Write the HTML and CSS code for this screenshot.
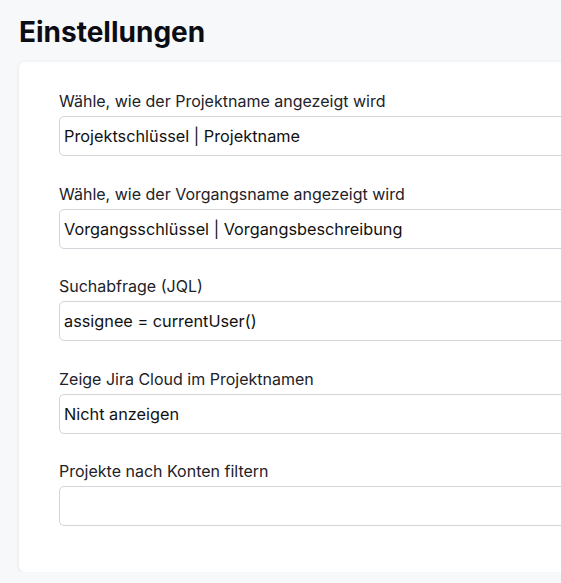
FILE: index.html
```html
<!DOCTYPE html>
<html lang="de">
<head>
  <meta charset="UTF-8">
  <meta name="viewport" content="width=device-width, initial-scale=1.0">
  <title>Einstellungen</title>
  <link rel="stylesheet" href="styles.css">
</head>
<body>
  <h1 class="page-title">Einstellungen</h1>

  <!-- Settings card -->
  <div class="settings-card">
    <div class="field">
      <label class="field-label">Wähle, wie der Projektname angezeigt wird</label>
      <div class="field-box">Projektschlüssel | Projektname</div>
    </div>

    <div class="field">
      <label class="field-label">Wähle, wie der Vorgangsname angezeigt wird</label>
      <div class="field-box">Vorgangsschlüssel | Vorgangsbeschreibung</div>
    </div>

    <div class="field">
      <label class="field-label">Suchabfrage (JQL)</label>
      <div class="field-box">assignee = currentUser()</div>
    </div>

    <div class="field">
      <label class="field-label">Zeige Jira Cloud im Projektnamen</label>
      <div class="field-box">Nicht anzeigen</div>
    </div>

    <div class="field">
      <label class="field-label">Projekte nach Konten filtern</label>
      <div class="field-box"></div>
    </div>
  </div>
</body>
</html>
```

FILE: styles.css
```css
/* Base Styling */
body {
  font-family: Inter, "Noto Sans", sans-serif;
  margin: 0;
  padding: 0;
  background-color: #f7f8fa;
  color: #1d1d24;
  overflow: hidden;
}

.page-title {
  font-size: 28px;
  font-weight: 700;
  line-height: 34px;
  margin: 15px 0 13px 19px;
  color: #0c0d14;
}

/* Card */
.settings-card {
  margin-left: 19px;
  width: 600px;
  background-color: #fff;
  border-radius: 6px;
  box-shadow: 0 1px 4px rgba(0, 0, 0, 0.08);
  padding: 29px 40px 46px;
}

.field {
  margin-bottom: 27.5px;
}

.field:last-child {
  margin-bottom: 0;
}

.field-label {
  display: block;
  font-size: 16px;
  line-height: 20px;
  margin-bottom: 5px;
  color: #222229;
}

.field-box {
  height: 38px;
  border: 1px solid #d4d4da;
  border-radius: 5px;
  padding: 0 4px;
  font-size: 16.3px;
  line-height: 38px;
  color: #111;
}
```
